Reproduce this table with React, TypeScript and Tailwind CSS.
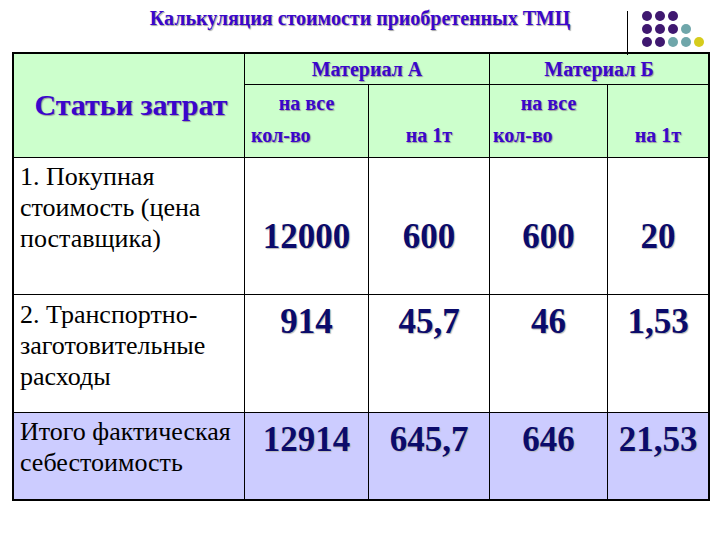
import React from "react";

function Dot({ c }: { c: string }) {
  return <span className={`block h-[10px] w-[10px] rounded-full ${c}`} />;
}

export default function App() {
  const P = "bg-[#3f1870]";
  const T = "bg-[#6fa6aa]";
  const Y = "bg-[#d6cc1c]";
  const num = "flex justify-center text-[35px] font-bold leading-[34px] text-[#0b0b6b] [text-shadow:1px_1px_1px_#b8b8b8]";
  const hdr = "text-[20px] font-bold leading-[32px] text-[#3a06cc] [text-shadow:1px_1px_1px_#9a9a9a]";
  const lbl = "pl-[6px] text-[26px] leading-[31px] text-black";
  return (
    <div className="h-[540px] w-[720px] bg-white font-serif">
      <div className="relative h-full w-full font-[Liberation_Serif]">
        <div className="h-[52px] pt-[5px] text-center">
          <span className="text-[20px] font-bold leading-[26px] text-[#3a06cc] [text-shadow:1px_1px_1px_#a0a0a0]">
            Калькуляция стоимости приобретенных ТМЦ
          </span>
        </div>
        <div className="absolute left-[627px] top-[11px] h-[44px] w-px bg-black" />
        <div className="absolute left-[642px] top-[11px] flex flex-col gap-[3px]">
          <div className="flex gap-[3px]"><Dot c={P} /><Dot c={P} /><Dot c={P} /></div>
          <div className="flex gap-[3px]"><Dot c={P} /><Dot c={P} /><Dot c={P} /><Dot c={T} /></div>
          <div className="flex gap-[3px]"><Dot c={P} /><Dot c={P} /><Dot c={T} /><Dot c={T} /><Dot c={Y} /></div>
        </div>

        <div className="ml-[12px] w-[698px] border-2 border-black">
          <div className="grid grid-cols-[230px_123px_120px_117px_100px] grid-rows-[30px_72px_136px_117px_86px] gap-px bg-black">
            <div className="row-span-2 flex items-center justify-center bg-[#ccffcc] pb-[2px] pl-[4px]">
              <span className="text-[30px] font-bold text-[#3a06cc] [text-shadow:1px_1px_1px_#9a9a9a]">Статьи затрат</span>
            </div>
            <div className={`col-span-2 flex items-center justify-center bg-[#ccffcc] ${hdr}`}>Материал А</div>
            <div className={`col-span-2 flex items-center justify-center bg-[#ccffcc] ${hdr}`}>Материал Б</div>

            <div className={`bg-[#ccffcc] pt-[2px] ${hdr}`}>
              <div className="text-center">на все</div>
              <div className="pl-[6px]">кол-во</div>
            </div>
            <div className={`bg-[#ccffcc] pt-[34px] text-center ${hdr}`}>на 1т</div>
            <div className={`bg-[#ccffcc] pt-[2px] ${hdr}`}>
              <div className="text-center">на все</div>
              <div className="pl-[3px]">кол-во</div>
            </div>
            <div className={`bg-[#ccffcc] pt-[34px] text-center ${hdr}`}>на 1т</div>

            <div className={`bg-white pt-[3px] ${lbl}`}>
              1. Покупная
              <br />
              стоимость (цена
              <br />
              поставщика)
            </div>
            <div className={`${num} bg-white pt-[62px]`}>12000</div>
            <div className={`${num} bg-white pt-[62px]`}>600</div>
            <div className={`${num} bg-white pt-[62px]`}>600</div>
            <div className={`${num} bg-white pt-[62px]`}>20</div>

            <div className={`bg-white pt-[4px] ${lbl}`}>
              2. Транспортно-
              <br />
              заготовительные
              <br />
              расходы
            </div>
            <div className={`${num} bg-white pt-[10px]`}>914</div>
            <div className={`${num} bg-white pt-[10px]`}>45,7</div>
            <div className={`${num} bg-white pt-[10px]`}>46</div>
            <div className={`${num} bg-white pt-[10px]`}>1,53</div>

            <div className={`bg-[#ccccff] pt-[3px] ${lbl}`}>
              Итого фактическая
              <br />
              себестоимость
            </div>
            <div className={`${num} bg-[#ccccff] pt-[10px]`}>12914</div>
            <div className={`${num} bg-[#ccccff] pt-[10px]`}>645,7</div>
            <div className={`${num} bg-[#ccccff] pt-[10px]`}>646</div>
            <div className={`${num} bg-[#ccccff] pt-[10px]`}>21,53</div>
          </div>
        </div>
      </div>
    </div>
  );
}
